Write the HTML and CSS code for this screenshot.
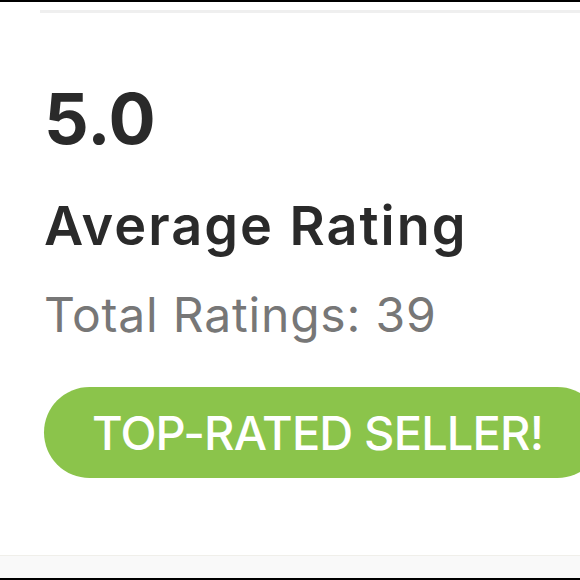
FILE: index.html
```html
<!DOCTYPE html>
<html lang="en">
<head>
<meta charset="utf-8">
<title>Rating</title>
<link rel="stylesheet" href="styles.css">
</head>
<body>
<div class="frame">
  <div class="top-edge"></div>
  <div class="divider"></div>
  <section class="rating">
    <div class="score">5.0</div>
    <h2 class="label">Average Rating</h2>
    <p class="total">Total Ratings: 39</p>
    <div class="badge">TOP-RATED SELLER!</div>
  </section>
  <div class="footer-band"></div>
  <div class="bottom-edge"></div>
</div>
</body>
</html>
```
FILE: styles.css
```css
html, body {
  margin: 0;
  padding: 0;
  background: #ffffff;
  overflow: hidden;
}
.frame {
  width: 580px;
  height: 580px;
  display: flex;
  flex-direction: column;
  font-family: "Inter", "Liberation Sans", sans-serif;
  font-variant-ligatures: none;
  overflow: hidden;
}
.top-edge {
  height: 2px;
  background: #000;
  flex: none;
}
.divider {
  height: 3px;
  margin: 8px 0 0 40px;
  background: #efefef;
  flex: none;
}
.rating {
  flex: 1;
  display: flex;
  flex-direction: column;
  align-items: flex-start;
  padding: 66px 0 0 44px;
}
.score {
  font-size: 70px;
  line-height: 80px;
  font-weight: 700;
  color: #2a2a2a;
}
.label {
  margin: 37px 0 0;
  font-size: 54px;
  line-height: 60px;
  font-weight: 600;
  letter-spacing: 2px;
  color: #2a2a2a;
}
.total {
  margin: 31px 0 0;
  font-size: 48px;
  line-height: 56px;
  font-weight: 400;
  letter-spacing: 0.8px;
  color: #777777;
}
.badge {
  margin-top: 44px;
  height: 91px;
  display: flex;
  align-items: center;
  padding: 0 60px 0 48px;
  border-radius: 46px;
  background: #8bc44b;
  color: #ffffff;
  font-size: 47px;
  font-weight: 500;
  letter-spacing: -0.85px;
  white-space: nowrap;
  flex: none;
}
.footer-band {
  height: 22px;
  background: #f9f9f9;
  border-top: 1px solid #f0efea;
  flex: none;
}
.bottom-edge {
  height: 2px;
  background: #000;
  flex: none;
}
```
